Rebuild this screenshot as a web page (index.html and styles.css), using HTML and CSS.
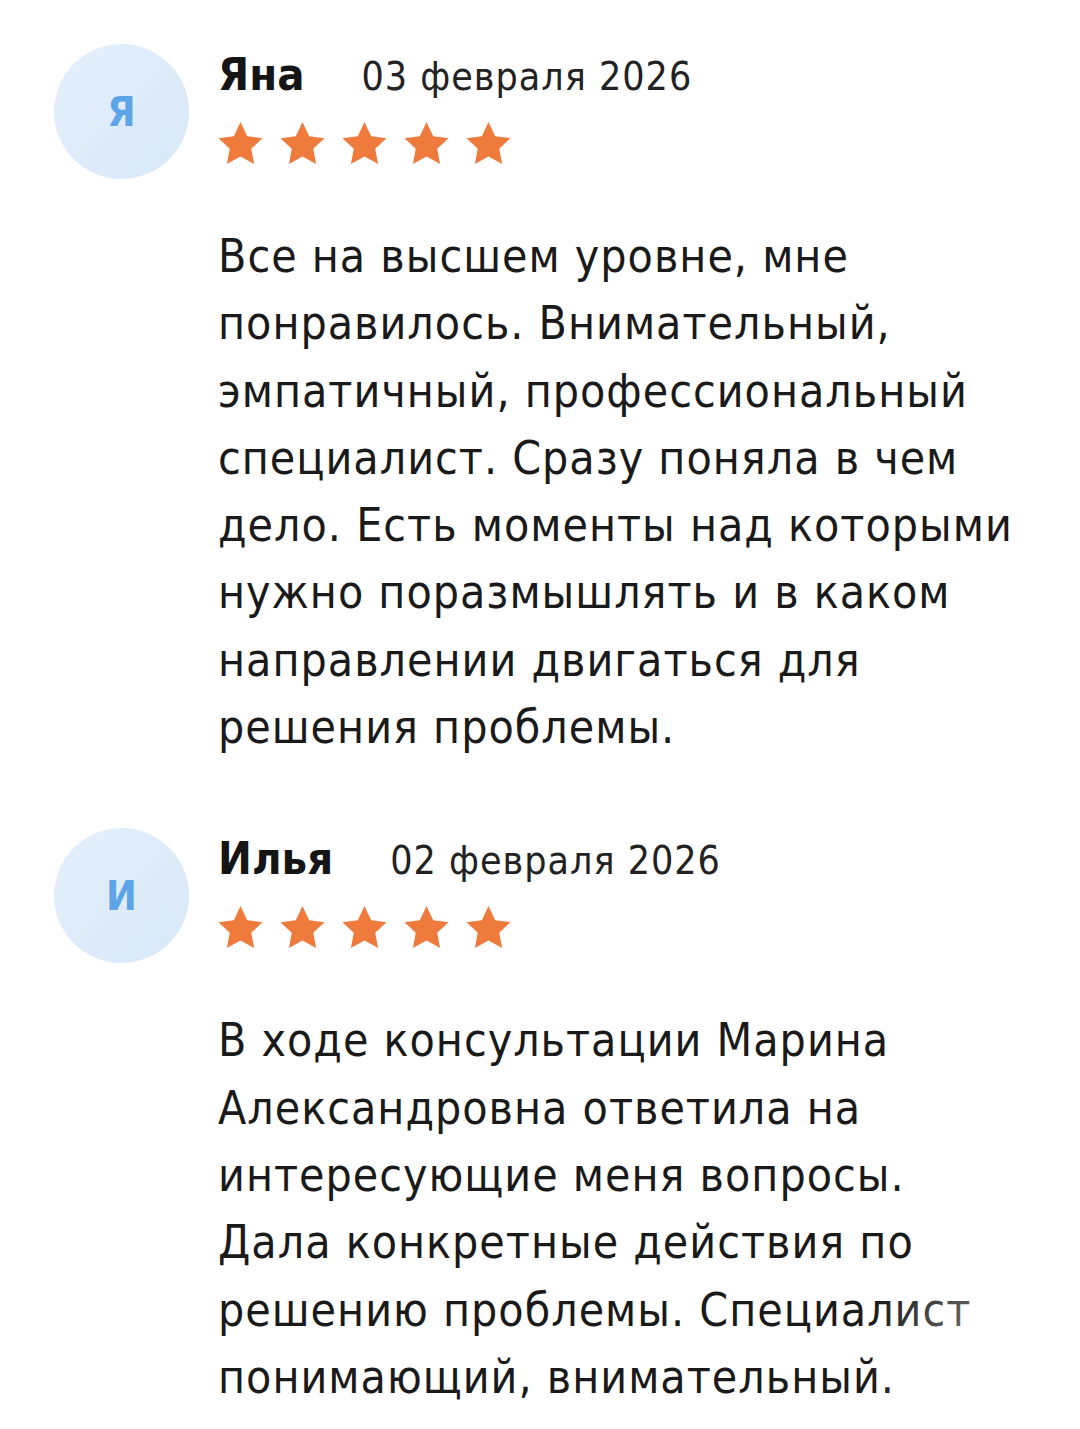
FILE: index.html
```html
<!DOCTYPE html>
<html lang="ru">
<head>
<meta charset="utf-8">
<link rel="stylesheet" href="styles.css">
</head>
<body>
<div class="list">
  <div class="review">
    <div class="avatar">Я</div>
    <div class="content">
      <div class="head"><span class="name">Яна</span><span class="date">03 февраля 2026</span></div>
      <div class="stars">
        <svg viewBox="1.8 1.8 20.4 19.5"><path d="M12 1.8l3.1 6.6 7.1.9-5.2 4.9 1.3 7.1L12 17.8l-6.3 3.5 1.3-7.1L1.8 9.3l7.1-.9z"/></svg>
        <svg viewBox="1.8 1.8 20.4 19.5"><path d="M12 1.8l3.1 6.6 7.1.9-5.2 4.9 1.3 7.1L12 17.8l-6.3 3.5 1.3-7.1L1.8 9.3l7.1-.9z"/></svg>
        <svg viewBox="1.8 1.8 20.4 19.5"><path d="M12 1.8l3.1 6.6 7.1.9-5.2 4.9 1.3 7.1L12 17.8l-6.3 3.5 1.3-7.1L1.8 9.3l7.1-.9z"/></svg>
        <svg viewBox="1.8 1.8 20.4 19.5"><path d="M12 1.8l3.1 6.6 7.1.9-5.2 4.9 1.3 7.1L12 17.8l-6.3 3.5 1.3-7.1L1.8 9.3l7.1-.9z"/></svg>
        <svg viewBox="1.8 1.8 20.4 19.5"><path d="M12 1.8l3.1 6.6 7.1.9-5.2 4.9 1.3 7.1L12 17.8l-6.3 3.5 1.3-7.1L1.8 9.3l7.1-.9z"/></svg>
      </div>
      <p class="text">Все на высшем уровне, мне понравилось. Внимательный, эмпатичный, профессиональный специалист. Сразу поняла в чем дело. Есть моменты над которыми нужно поразмышлять и в каком направлении двигаться для решения проблемы.</p>
    </div>
  </div>
  <div class="review">
    <div class="avatar">И</div>
    <div class="content">
      <div class="head"><span class="name">Илья</span><span class="date">02 февраля 2026</span></div>
      <div class="stars">
        <svg viewBox="1.8 1.8 20.4 19.5"><path d="M12 1.8l3.1 6.6 7.1.9-5.2 4.9 1.3 7.1L12 17.8l-6.3 3.5 1.3-7.1L1.8 9.3l7.1-.9z"/></svg>
        <svg viewBox="1.8 1.8 20.4 19.5"><path d="M12 1.8l3.1 6.6 7.1.9-5.2 4.9 1.3 7.1L12 17.8l-6.3 3.5 1.3-7.1L1.8 9.3l7.1-.9z"/></svg>
        <svg viewBox="1.8 1.8 20.4 19.5"><path d="M12 1.8l3.1 6.6 7.1.9-5.2 4.9 1.3 7.1L12 17.8l-6.3 3.5 1.3-7.1L1.8 9.3l7.1-.9z"/></svg>
        <svg viewBox="1.8 1.8 20.4 19.5"><path d="M12 1.8l3.1 6.6 7.1.9-5.2 4.9 1.3 7.1L12 17.8l-6.3 3.5 1.3-7.1L1.8 9.3l7.1-.9z"/></svg>
        <svg viewBox="1.8 1.8 20.4 19.5"><path d="M12 1.8l3.1 6.6 7.1.9-5.2 4.9 1.3 7.1L12 17.8l-6.3 3.5 1.3-7.1L1.8 9.3l7.1-.9z"/></svg>
      </div>
      <p class="text fade">В ходе консультации Марина Александровна ответила на интересующие меня вопросы. Дала конкретные действия по решению проблемы. Специалист понимающий, внимательный.</p>
    </div>
  </div>
</div>
</body>
</html>
```
FILE: styles.css
```css
html, body {
  margin: 0;
  padding: 0;
  background: #ffffff;
}
body {
  font-family: "DejaVu Sans Condensed", "DejaVu Sans", sans-serif;
  color: #1a1a1a;
}
.list {
  padding: 44px 56px 0 54px;
  display: flex;
  flex-direction: column;
  gap: 67px;
}
.review {
  display: flex;
  gap: 29px;
  align-items: flex-start;
}
.avatar {
  flex: 0 0 135px;
  width: 135px;
  height: 135px;
  border-radius: 50%;
  background: linear-gradient(135deg, #e4effb, #d8e8f8);
  color: #5da5e6;
  font-weight: bold;
  font-size: 41px;
  display: flex;
  align-items: center;
  justify-content: center;
}
.content {
  flex: 1;
  min-width: 0;
}
.head {
  display: flex;
  align-items: baseline;
  gap: 57px;
  margin-top: 6px;
  line-height: 50px;
}
.name {
  font-weight: bold;
  font-size: 45px;
  color: #151515;
}
.date {
  font-size: 39px;
  letter-spacing: 1px;
  color: #222222;
}
.stars {
  display: flex;
  gap: 17px;
  margin-top: 20px;
}
.stars svg {
  width: 45px;
  height: 42px;
  fill: #ee7b3c;
}
.text {
  margin: 59px 0 0;
  font-size: 46px;
  letter-spacing: 1px;
  line-height: 67.3px;
  color: #1a1a1a;
}
.fade {
  position: relative;
}
.fade::after {
  content: "";
  position: absolute;
  right: -40px;
  bottom: 0;
  width: 200px;
  height: 200px;
  background: radial-gradient(ellipse at 80% 70%, rgba(255,255,255,0.55), rgba(255,255,255,0) 70%);
  pointer-events: none;
}
```
